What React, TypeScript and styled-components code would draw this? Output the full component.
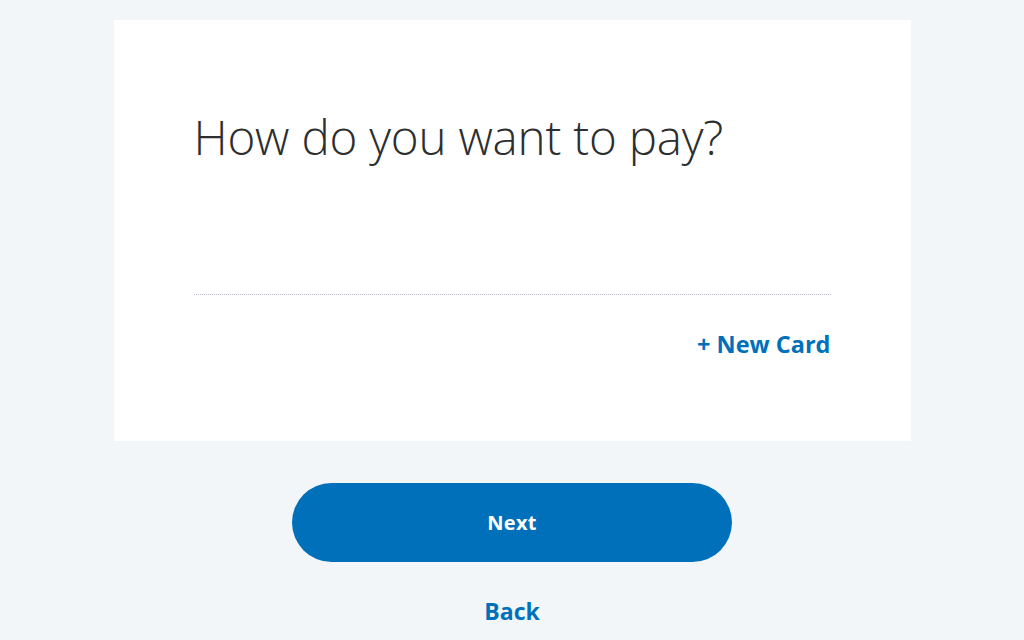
import * as React from 'react';
import styled, { createGlobalStyle } from 'styled-components';

const GlobalStyle = createGlobalStyle`
  html, body {
    margin: 0;
    padding: 0;
    background: #f3f6f9;
    font-family: "Open Sans", "Noto Sans", sans-serif;
  }
`;

const StyledPage = styled.div`
  width: 1024px;
  height: 640px;
  overflow: hidden;
  display: flex;
  flex-direction: column;
  align-items: center;
  padding-top: 20px;
  box-sizing: border-box;
`;

const StyledCard = styled.div`
  width: 797px;
  height: 421px;
  background: #ffffff;
  box-sizing: border-box;
  padding: 89px 80px 0 80px;
  display: flex;
  flex-direction: column;
`;

const StyledHeading = styled.h1`
  margin: 0;
  font-size: 47.5px;
  font-weight: 300;
  color: #2c2e2f;
  line-height: 56px;
  letter-spacing: -0.2px;
`;

const StyledDivider = styled.div`
  margin-top: 129px;
  border-top: 1px dotted #b9bfc4;
  width: 637px;
`;

const StyledLinkRow = styled.div`
  display: flex;
  justify-content: flex-end;
  width: 637px;
  margin-top: 34px;
`;

const StyledLink = styled.a<{ size?: number }>`
  color: #0070ba;
  font-weight: 700;
  font-size: ${({ size = 23.5 }) => size}px;
  line-height: 30px;
  text-decoration: none;
  cursor: pointer;
`;

const StyledButton = styled.button`
  margin-top: 42px;
  width: 440px;
  height: 79px;
  border: none;
  border-radius: 40px;
  background: #0070ba;
  color: #ffffff;
  font-family: inherit;
  font-size: 20px;
  font-weight: 700;
  letter-spacing: 0.3px;
  cursor: pointer;
`;

const StyledBack = styled.div`
  margin-top: 34px;
`;

export default function App() {
  return (
    <>
      <GlobalStyle />
      <StyledPage>
        <StyledCard>
          <StyledHeading>How do you want to pay?</StyledHeading>
          <StyledDivider />
          <StyledLinkRow>
            <StyledLink>+ New Card</StyledLink>
          </StyledLinkRow>
        </StyledCard>
        <StyledButton>Next</StyledButton>
        <StyledBack>
          <StyledLink size={23}>Back</StyledLink>
        </StyledBack>
      </StyledPage>
    </>
  );
}
